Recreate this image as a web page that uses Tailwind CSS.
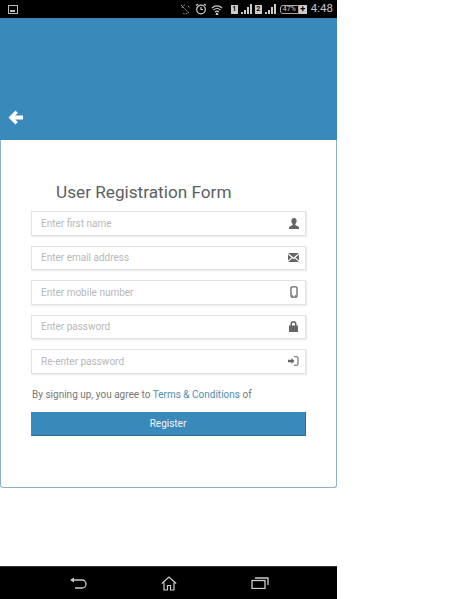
<!DOCTYPE html>
<html lang="en">
<head>
  <meta charset="UTF-8">
  <meta name="viewport" content="width=device-width, initial-scale=1.0">
  <title>User Registration Form</title>
  <script src="https://cdn.jsdelivr.net/npm/@tailwindcss/browser@4"></script>
</head>
<body class="bg-white font-['Roboto',sans-serif]">
  <div class="w-[337px] h-[599px] flex flex-col">
    <!-- status bar -->
    <div class="h-[18px] bg-black flex items-center pl-[8px] pr-[4px] text-[#c4c4c4] shrink-0">
      <svg class="w-[10px] h-[9px]" viewBox="0 0 10 9"><rect x="0.5" y="0.5" width="9" height="8" fill="none" stroke="#bbb"/><rect x="2" y="5" width="5" height="2" fill="#bbb"/></svg>
      <div class="flex-1"></div>
      <svg class="w-[12px] h-[12px] mr-[4px]" viewBox="0 0 12 12" fill="none" stroke="#999"><path d="M2 2l8 8M3 5a3 3 0 0 1 3-3M4 10a3 3 0 0 0 5-1M9 3l2 2" stroke-dasharray="2 1"/></svg>
      <svg class="w-[12px] h-[12px] mr-[4px]" viewBox="0 0 12 12" fill="none" stroke="#ccc" stroke-width="1.2"><circle cx="6" cy="6.5" r="4.3"/><path d="M6 4v2.5h2M1 2.5l2-1.5M11 2.5L9 1"/></svg>
      <svg class="w-[12px] h-[11px] mr-[8px]" viewBox="0 0 12 11" fill="none" stroke="#ccc" stroke-width="1.1"><path d="M1 4a7 7 0 0 1 10 0M2.500 6a5 5 0 0 1 7 0M4 8a3 3 0 0 1 4 0"/><circle cx="6" cy="10" r="0.8" fill="#ccc"/></svg>
      <span class="w-[7px] h-[9px] bg-[#ccc] text-black text-[7px] leading-[9px] font-bold text-center mr-[3px]">1</span>
      <svg class="w-[11px] h-[10px] mr-[3px]" viewBox="0 0 11 10" fill="#ccc"><rect x="0" y="8" width="2" height="2"/><rect x="3" y="6" width="2" height="4"/><rect x="6" y="3" width="2" height="7"/><rect x="9" y="0" width="2" height="10"/></svg>
      <span class="w-[7px] h-[9px] bg-[#ccc] text-black text-[7px] leading-[9px] font-bold text-center mr-[3px]">2</span>
      <svg class="w-[11px] h-[10px] mr-[4px]" viewBox="0 0 11 10" fill="#ccc"><rect x="0" y="8" width="2" height="2"/><rect x="3" y="6" width="2" height="4"/><rect x="6" y="3" width="2" height="7"/><rect x="9" y="0" width="2" height="10"/></svg>
      <span class="w-[19px] h-[9px] border border-[#aaa] rounded-l-[3px] text-[7px] leading-[7px] text-center text-[#ccc]">47%</span>
      <span class="w-[8px] h-[9px] bg-[#ccc] text-black text-[9px] leading-[8px] font-bold text-center mr-[4px]">+</span>
      <span class="text-[11.500px] leading-none">4:48</span>
    </div>

    <!-- header -->
    <div class="h-[122px] bg-[#3a89bb] flex items-end pl-[8px] pb-[15px] shrink-0">
      <svg class="w-[15px] h-[15px]" viewBox="0 0 15 15" fill="#fff"><path d="M7.500.500l2.400 2.400-2.700 2.700H15v3.800H7.200l2.700 2.700-2.400 2.400L.5 7.500z"/></svg>
    </div>

    <!-- form card -->
    <div class="h-[348px] border border-t-0 border-[#8db4c4] rounded-b-[3px] px-[30px] pt-[41px] shrink-0">
      <h1 class="text-[17.200px] leading-[22px] text-[#5c6064] pl-[25px] mb-[8px]">User Registration Form</h1>
      <form class="flex flex-col gap-[10px]">
        <label class="h-[24.500px] border border-[#e2e2e2] shadow-[1px_1px_2px_#e8e8e8] flex items-center justify-between pl-[9px] pr-[6px] text-[10px] text-[#b8b8b8]">
          <span>Enter first name</span>
          <svg class="w-[10px] h-[11px]" viewBox="0 0 10 11" fill="#666"><path d="M5 0c1.700 0 2.600 1.200 2.600 2.900 0 1.300-.6 2.500-1.300 3.100v1L10 9v2H0V9l3.700-2V6C3 5.400 2.400 4.200 2.400 2.900 2.400 1.200 3.300 0 5 0z"/></svg>
        </label>
        <label class="h-[24.500px] border border-[#e2e2e2] shadow-[1px_1px_2px_#e8e8e8] flex items-center justify-between pl-[9px] pr-[6px] text-[10px] text-[#b8b8b8]">
          <span>Enter email address</span>
          <svg class="w-[11px] h-[9px]" viewBox="0 0 11 9" fill="#666"><path d="M0 0h11L5.500 4.500zM0 1.500v6L3.500 4.500zM11 1.500v6L7.500 4.500zM0 9l4.200-3.800 1.300 1 1.300-1L11 9z"/></svg>
        </label>
        <label class="h-[24.500px] border border-[#e2e2e2] shadow-[1px_1px_2px_#e8e8e8] flex items-center justify-between pl-[9px] pr-[7px] text-[10px] text-[#b8b8b8]">
          <span>Enter mobile number</span>
          <svg class="w-[8px] h-[12px]" viewBox="0 0 8 12" fill="none" stroke="#666" stroke-width="1.300"><rect x="1" y="0.800" width="6" height="10.400" rx="1.200"/><path d="M2 10h1M5 10h1"/></svg>
        </label>
        <label class="h-[24.500px] border border-[#e2e2e2] shadow-[1px_1px_2px_#e8e8e8] flex items-center justify-between pl-[9px] pr-[7px] text-[10px] text-[#b8b8b8]">
          <span>Enter password</span>
          <svg class="w-[9px] h-[11px]" viewBox="0 0 9 11" fill="#666"><path d="M1.500 4.500V3a3 3 0 0 1 6 0v1.500H9V11H0V4.500zm1.500 0h3V3a1.500 1.500 0 0 0-3 0z"/></svg>
        </label>
        <label class="h-[24.500px] border border-[#e2e2e2] shadow-[1px_1px_2px_#e8e8e8] flex items-center justify-between pl-[9px] pr-[6px] text-[10px] text-[#b8b8b8]">
          <span>Re-enter password</span>
          <svg class="w-[11px] h-[10px]" viewBox="0 0 11 10" fill="#666"><path d="M3.500 2l3 3-3 3V6.200H0V3.800h3.500z"/><path d="M6 .7h2.800a1.200 1.200 0 0 1 1.200 1.200v6.200a1.200 1.200 0 0 1-1.200 1.200H6" fill="none" stroke="#666" stroke-width="1.100"/></svg>
        </label>
      </form>
      <p class="mt-[14px] pl-[1px] text-[10px] leading-[13px] text-[#777]">By signing up, you agree to <a class="text-[#4f8fb0]">Terms &amp; Conditions</a> of</p>
      <button type="button" class="mt-[11px] w-full h-[24px] bg-[#3a89bb] border-b border-r border-[#2f6d94] text-[10px] text-[#eef6fb]">Register</button>
    </div>

    <div class="flex-1"></div>

    <!-- nav bar -->
    <div class="h-[33px] bg-black border-t border-[#333] flex items-center pl-[69px] pr-[68px] justify-between shrink-0">
      <svg class="w-[18px] h-[12px]" viewBox="0 0 18 12" fill="none" stroke="#ccc" stroke-width="1.300"><path d="M3 3h10a3.500 3.500 0 0 1 0 8H6"/><path d="M1 3l4-2.500v5z" fill="#ccc" stroke="none"/></svg>
      <svg class="w-[16px] h-[15px]" viewBox="0 0 16 15" fill="none" stroke="#ccc" stroke-width="1.200"><path d="M.8 7.500L8 1l7.200 6.500M3 6.500V14h3.500V9.500h3V14H13V6.500"/></svg>
      <svg class="w-[18px] h-[12px]" viewBox="0 0 18 12" fill="none" stroke="#ccc" stroke-width="1.300"><rect x="1" y="3.500" width="13" height="8"/><path d="M4 1h13v7"/></svg>
    </div>
  </div>
</body>
</html>
